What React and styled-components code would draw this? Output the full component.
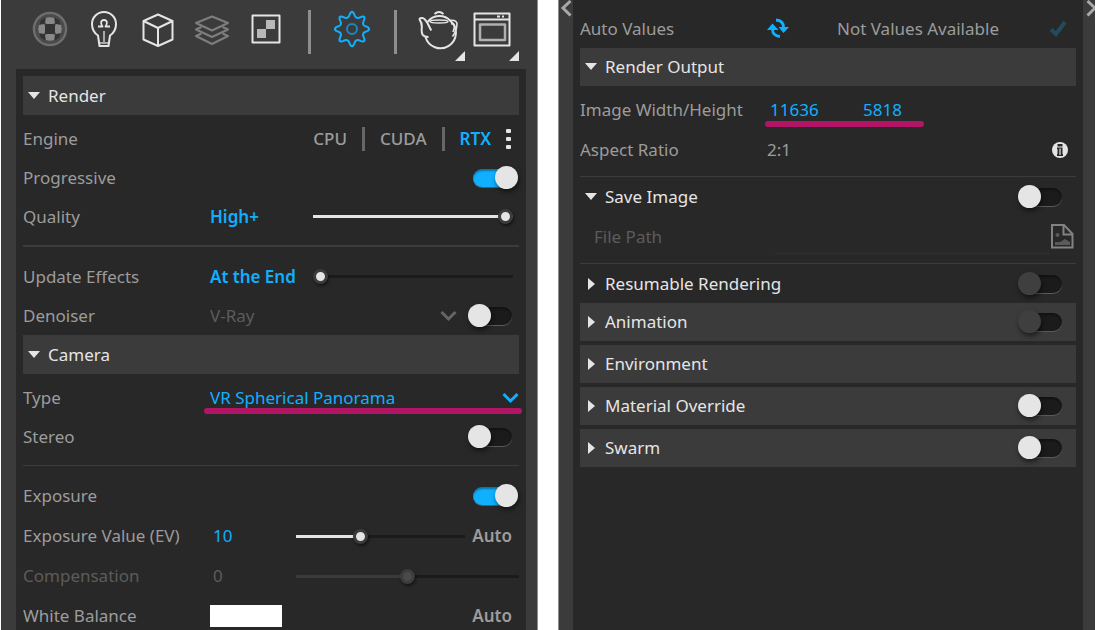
import React, { useState } from "react";
import styled, { createGlobalStyle } from "styled-components";

const c = {
  frame: "#3b3b3b",
  panel: "#282828",
  edge: "#8c8c8c",
  line: "#3c3c3c",
  label: "#9c9c9c",
  dim: "#5c5c5c",
  bright: "#e5e5e5",
  accent: "#10b0ff",
  mark: "#b31566",
  groove: "#1b1b1b",
};

const GlobalStyle = createGlobalStyle`
  *, *::before, *::after { box-sizing: border-box; }
  body {
    margin: 0;
    background: #fff;
    font-family: "Noto Sans", "Open Sans", sans-serif;
    font-size: 17px;
    line-height: 24px;
    color: ${c.label};
  }
  button, input, select { font: inherit; color: inherit; }
  button { padding: 0; border: 0; background: none; cursor: pointer; }
`;

const Page = styled.main`
  display: grid;
  grid-template-columns: minmax(0, 1fr) minmax(0, 1fr);
  gap: 20px;
  height: 100vh;
  padding: 0 1px;
  overflow: hidden;
`;

const LeftFrame = styled.section`
  display: flex;
  flex-direction: column;
  padding: 0 11px 0 15px;
  background: ${c.frame};
  border-right: 1px solid ${c.edge};
  overflow: hidden;
`;

const RightFrame = styled.section`
  display: grid;
  grid-template-columns: 14px minmax(0, 1fr) 12px;
  background: ${c.frame};
  border-left: 1px solid ${c.edge};
  overflow: hidden;
`;

const Panel = styled.div`
  flex: 1 0 auto;
  padding: 7px;
  background: ${c.panel};
`;

const Toolbar = styled.nav`
  display: flex;
  flex: none;
  align-items: flex-start;
  height: 69px;
  padding-left: 7px;
`;

const Tool = styled.button`
  position: relative;
  display: flex;
  align-items: center;
  justify-content: center;
  width: 54px;
  height: 60px;
  color: ${(p) => p.$tone || c.bright};
`;

const Corner = styled.span`
  position: absolute;
  right: 0;
  bottom: -1px;
  width: 10px;
  height: 10px;
  background: ${c.bright};
  clip-path: polygon(100% 0, 100% 100%, 0 100%);
`;

const ToolSeparator = styled.span`
  width: 3px;
  height: 44px;
  margin: 10px 14px 0 15px;
  background: #8e8e8e;
`;

const Rail = styled.button`
  display: flex;
  align-items: flex-start;
  justify-content: center;
  color: #a8a8a8;
`;

const Bar = styled.div`
  display: flex;
  align-items: center;
  height: ${(p) => p.$height || 38}px;
  background: ${(p) => (p.$plain ? "transparent" : c.frame)};
`;

const BarButton = styled.button`
  display: flex;
  flex: 1;
  align-items: center;
  gap: 8px;
  height: 100%;
  padding-left: 5px;
  color: ${c.bright};
  text-align: left;
`;

const BarStack = styled.div`
  display: grid;
  gap: 4px;
`;

const Group = styled.div`
  padding-top: ${(p) => (p.$first ? 4 : 0)}px;
`;

const Row = styled.div`
  display: grid;
  grid-template-columns: 187px minmax(0, 1fr);
  align-items: center;
  height: ${(p) => (p.$tall ? 40 : 39)}px;
  color: ${(p) => (p.$dim ? c.dim : c.label)};
`;

const Label = styled.label`
  white-space: nowrap;
  padding-left: ${(p) => (p.$indent ? 14 : 0)}px;
`;

const Cell = styled.div`
  position: relative;
  display: flex;
  align-items: center;
  justify-content: ${(p) => (p.$end ? "flex-end" : "flex-start")};
  height: 100%;
`;

const Divider = styled.hr`
  height: ${(p) => p.$weight || 1}px;
  margin: ${(p) => (p.$close ? "6px 0 0" : "9px 0 10px")};
  border: 0;
  background: ${c.line};
`;

const Strong = styled.output`
  flex: 1;
  font-weight: 600;
  color: ${c.accent};
  white-space: nowrap;
`;

const Choice = styled.button`
  font-weight: ${(p) => (p.$on ? 600 : 500)};
  color: ${(p) => (p.$on ? c.accent : c.label)};
`;

const ChoiceSeparator = styled.span`
  width: 3px;
  height: 24px;
  margin: 0 15px;
  background: #666;
`;

const More = styled.button`
  display: grid;
  gap: 4px;
  margin: 0 8px 0 15px;
`;

const Dot = styled.span`
  width: 5px;
  height: 4px;
  border-radius: 1px;
  background: ${c.bright};
`;

const Toggle = styled.input.attrs({ type: "checkbox", role: "switch" })`
  appearance: none;
  position: relative;
  flex: none;
  width: 39px;
  height: 18px;
  margin: 0 ${(p) => (p.$inset ? 14 : 7)}px 0 0;
  border-radius: 9px;
  background: ${c.groove};
  box-shadow: inset 0 2px 2px rgba(0, 0, 0, 0.35), 0 1px 0 #5a5a5a;

  &::before {
    content: "";
    position: absolute;
    left: -5px;
    top: -3px;
    width: 23px;
    height: 23px;
    border-radius: 50%;
    background: ${c.bright};
    box-shadow: 1px 3px 5px rgba(0, 0, 0, 0.5);
  }
  &:checked { background: ${c.accent}; }
  &:checked::before { left: 22px; }
  &:disabled::before { background: #3f3f3f; }
`;

const Slider = styled.input.attrs({ type: "range", min: 0, max: 100 })`
  appearance: none;
  flex: none;
  width: ${(p) => p.$width}px;
  height: 15px;
  margin: 0 ${(p) => p.$after || 0}px 0 0;
  background: linear-gradient(
      to right,
      ${(p) => (p.disabled ? "#3a3a3a" : c.bright)} ${(p) => p.value}%,
      ${c.groove} ${(p) => p.value}%
    )
    center / 100% 3px no-repeat;

  &::-webkit-slider-thumb {
    appearance: none;
    width: 15px;
    height: 15px;
    border: 3px solid #3c3c3c;
    border-radius: 50%;
    background: ${(p) => (p.disabled ? "#4a4a4a" : c.bright)};
    box-shadow: 1px 2px 3px rgba(0, 0, 0, 0.5);
  }
`;

const Select = styled.select`
  appearance: none;
  width: 100%;
  padding: 0;
  border: 0;
  background: none;
  color: ${(p) => (p.disabled ? c.dim : c.accent)};
  opacity: 1;
`;

const SelectBox = styled.div`
  position: relative;
  display: flex;
  flex: 1;
  align-items: center;
  margin-right: ${(p) => p.$after || 0}px;
  color: ${(p) => (p.$dim ? "#666" : c.accent)};
  svg { position: absolute; right: 0; pointer-events: none; }
`;

const NumberField = styled.input`
  width: ${(p) => p.$width}px;
  padding: 0 0 0 3px;
  border: 0;
  background: none;
  color: ${(p) => (p.disabled ? c.dim : c.accent)};
`;

const PathField = styled.input`
  flex: 1;
  height: 33px;
  min-width: 0;
  margin-left: 8px;
  padding: 0;
  border: 0;
  border-bottom: 1px solid #303030;
  background: none;
`;

const Auto = styled.button`
  margin-right: 7px;
  font-weight: 600;
`;

const Swatch = styled.input.attrs({ type: "color" })`
  appearance: none;
  width: 72px;
  height: 22px;
  padding: 0;
  border: 0;
  background: none;
  &::-webkit-color-swatch-wrapper { padding: 0; }
  &::-webkit-color-swatch { border: 0; border-radius: 0; }
`;

const Spacer = styled.span`
  flex: 1;
`;

const IconButton = styled.button`
  display: flex;
  margin-right: ${(p) => p.$after || 0}px;
  color: ${(p) => p.$tone};
`;

const Marker = styled.span`
  position: absolute;
  left: ${(p) => p.$left}px;
  right: ${(p) => p.$right};
  bottom: 3px;
  width: ${(p) => p.$width};
  height: 6px;
  border-radius: 3px;
  background: ${c.mark};
  pointer-events: none;
`;

const ToolSvg = ({ children }) => (
  <svg width="40" height="40" viewBox="0 0 40 40" fill="none" stroke="currentColor" strokeWidth="2" strokeLinejoin="round" aria-hidden="true">
    {children}
  </svg>
);

const gearPath = (() => {
  const pts = [];
  for (let i = 0; i < 160; i += 1) {
    const a = (i / 160) * Math.PI * 2;
    const r = 14.3 + 2.5 * Math.cos(8 * a) + 0.4 * Math.cos(16 * a);
    pts.push(`${(20 + r * Math.cos(a)).toFixed(2)} ${(19 + r * Math.sin(a)).toFixed(2)}`);
  }
  return `M${pts.join("L")}Z`;
})();

const MaterialIcon = () => (
  <ToolSvg>
    <circle cx="20" cy="19" r="14.5" fill="#4c4c4c" stroke="none" />
    <g stroke="none" fill="#333">
      <path d="M10.500 10.500l4.500-3 1 5.500-2 1-4.500 1z" />
      <path d="M29.500 10.500l-4.500-3-1 5.500 2 1 4.500 1z" />
      <path d="M10.500 27.500l4.500 3 1-5.500-2-1-4.500-1z" />
      <path d="M29.500 27.500l-4.500 3-1-5.500 2-1 4.500-1z" />
      <path d="M17 13h6l3 3v6l-3 3h-6l-3-3v-6z" />
    </g>
    <g stroke="none" fill="#888">
      <path d="M16 8q4-1.500 8 0l1 5-2 1h-6l-2-1z" />
      <path d="M16 30q4 1.500 8 0l1-5-2-1h-6l-2 1z" />
      <path d="M9 15q-1.500 4 0 8l5 1 1-2v-6l-1-2z" />
      <path d="M31 15q1.500 4 0 8l-5 1-1-2v-6l1-2z" />
    </g>
    <circle cx="20" cy="19" r="16" stroke="#6e6e6e" strokeWidth="2.500" />
  </ToolSvg>
);

const LightIcon = () => (
  <ToolSvg>
    <path d="M15.500 36L14 25.500C11 23.500 8 20 8 14a12 12 0 0 1 24 0c0 6-3 9.500-6 11.500L24.500 36z" />
    <path d="M14 16.500h4.500C16 13 17 10 20 10s4 3 1.500 6.500H26" strokeWidth="1.800" />
    <path d="M20 21v11" stroke="#a8a8a8" />
    <path d="M16 33h8" stroke="#a8a8a8" />
  </ToolSvg>
);

const GeometryIcon = () => (
  <ToolSvg>
    <path d="M20 4.500l14.500 6.500v18.500L20 36 5.500 29.500V11zM5.500 11L20 18l14.500-7M20 18v18" />
  </ToolSvg>
);

const LayersIcon = () => (
  <ToolSvg>
    <path d="M20 6.500L36 13 20 20.500 4 13z" />
    <path d="M9.500 17L4 19.500 20 27l16-7.500-5.500-2.500" />
    <path d="M9.500 23.500L4 26l16 8 16-8-5.500-2.500" />
  </ToolSvg>
);

const TextureIcon = () => (
  <ToolSvg>
    <rect x="6.500" y="5.500" width="27" height="27" />
    <path d="M20 10h9v9h-9zM11 19h9v9h-9z" fill="#b8b8b8" stroke="none" />
  </ToolSvg>
);

const SettingsIcon = () => (
  <ToolSvg>
    <path d={gearPath} />
    <circle cx="20" cy="19" r="5" stroke="#1b87c0" />
  </ToolSvg>
);

const TeapotIcon = () => (
  <ToolSvg>
    <path d="M9.500 12A15 15 0 0 1 32.500 11 15.500 15.500 0 1 1 7.500 27" />
    <path d="M13.300 20.500C10 15 8.500 8.500 4.500 8 2 7.500 1 9 2 10.500 6 15 2 20 4.500 24.500q1.500 2.500 6 2.500" />
    <ellipse cx="21" cy="11.500" rx="9" ry="1.500" strokeWidth="1.500" />
    <path d="M16.500 4q4.500-4 9 0" strokeWidth="1.800" />
    <path d="M32 10.500q6-1 7 3 0 7-4.500 13M33 14q3.500-1 3.500 1.500T35 22" strokeWidth="1.600" />
  </ToolSvg>
);

const FrameIcon = () => (
  <ToolSvg>
    <rect x="2.500" y="3.500" width="35" height="32" />
    <path d="M3 9.500h34" />
    <path d="M25 6.500h3M30 6.500h2" />
    <rect x="8" y="14.500" width="25" height="15.500" stroke="#b0b0b0" strokeWidth="2.500" />
  </ToolSvg>
);

const Chevron = () => (
  <svg width="17" height="12" viewBox="0 0 17 12" fill="none" stroke="currentColor" strokeWidth="3" aria-hidden="true">
    <path d="M1.500 2L8.500 9l7-7" />
  </svg>
);

const Arrow = ({ open }) => (
  <svg width="12" height="12" viewBox="0 0 12 12" fill="currentColor" aria-hidden="true">
    <path d={open ? "M0 2h12L6 9z" : "M3 0l7 6-7 6z"} />
  </svg>
);

const RefreshIcon = () => (
  <svg width="24" height="24" viewBox="0 0 24 24" fill="currentColor" aria-hidden="true">
    <path d="M0 13l5.500-6.500L11.500 13zM11.500 10h10.500L16.500 16z" />
    <path d="M5.500 12q0 7 7.500 7.500M9 3q7.500.5 7.500 7.500" fill="none" stroke="currentColor" strokeWidth="2.800" />
  </svg>
);

const CheckIcon = () => (
  <svg width="18" height="18" viewBox="0 0 18 18" fill="none" stroke="currentColor" strokeWidth="4" aria-hidden="true">
    <path d="M2 9.500L7 14l9-12" />
  </svg>
);

const InfoIcon = () => (
  <svg width="16" height="16" viewBox="0 0 16 16" aria-hidden="true">
    <circle cx="8" cy="8" r="8" fill="currentColor" />
    <path d="M5.500 2h5v2.500h-5zM5 5.500h5.500V12H11v2H5v-2h.5V7H5z" fill="#282828" />
    <path d="M7 6.500h2V13H7z" fill="#9a9a9a" />
  </svg>
);

const FileIcon = () => (
  <svg width="24" height="26" viewBox="0 0 24 26" fill="none" stroke="currentColor" strokeWidth="2" aria-hidden="true">
    <path d="M2 1h12l8.500 9v13.500H2z" />
    <path d="M13.500 1v9.500h9" />
    <circle cx="7.500" cy="11" r="2" fill="#5a5a5a" stroke="none" />
    <path d="M5 21v-3h5l5-3 5 3v3z" fill="#5a5a5a" stroke="none" />
  </svg>
);

function Section({ title, height, plain, open = false, toggle }) {
  const [on, setOn] = useState(false);
  return (
    <Bar $height={height} $plain={plain}>
      <BarButton type="button" aria-expanded={open}>
        <Arrow open={open} />
        {title}
      </BarButton>
      {toggle && (
        <Toggle
          $inset
          aria-label={title}
          checked={on}
          disabled={toggle === "disabled"}
          onChange={(e) => setOn(e.target.checked)}
        />
      )}
    </Bar>
  );
}

function Range({ start, ...rest }) {
  const [value, setValue] = useState(start);
  return <Slider value={value} onChange={(e) => setValue(e.target.value)} {...rest} />;
}

function RenderSettings() {
  return (
    <Panel>
      <Section title="Render" height={39} open />
      <Group $first>
        <Row>
          <span>Engine</span>
          <Cell $end>
            <Choice type="button">CPU</Choice>
            <ChoiceSeparator />
            <Choice type="button">CUDA</Choice>
            <ChoiceSeparator />
            <Choice type="button" $on>RTX</Choice>
            <More type="button" aria-label="More engine options">
              <Dot /><Dot /><Dot />
            </More>
          </Cell>
        </Row>
        <Row>
          <Label htmlFor="progressive">Progressive</Label>
          <Cell $end><Toggle id="progressive" defaultChecked /></Cell>
        </Row>
        <Row>
          <Label htmlFor="quality">Quality</Label>
          <Cell>
            <Strong>High+</Strong>
            <Range id="quality" start={100} $width={200} $after={6} />
          </Cell>
        </Row>
      </Group>
      <Divider $weight={2} />
      <Group>
        <Row>
          <Label htmlFor="effects">Update Effects</Label>
          <Cell>
            <Strong>At the End</Strong>
            <Range id="effects" start={0} $width={200} $after={6} />
          </Cell>
        </Row>
        <Row>
          <Label htmlFor="denoiser">Denoiser</Label>
          <Cell>
            <SelectBox $dim $after={16}>
              <Select id="denoiser" disabled><option>V-Ray</option></Select>
              <Chevron />
            </SelectBox>
            <Toggle aria-label="Use denoiser" />
          </Cell>
        </Row>
      </Group>
      <Section title="Camera" height={39} open />
      <Group $first>
        <Row>
          <Label htmlFor="type">Type</Label>
          <Cell>
            <SelectBox>
              <Select id="type"><option>VR Spherical Panorama</option></Select>
              <Chevron />
            </SelectBox>
            <Marker $left={-6} $right="-3px" />
          </Cell>
        </Row>
        <Row>
          <Label htmlFor="stereo">Stereo</Label>
          <Cell $end><Toggle id="stereo" /></Cell>
        </Row>
      </Group>
      <Divider />
      <Group>
        <Row $tall>
          <Label htmlFor="exposure">Exposure</Label>
          <Cell $end><Toggle id="exposure" defaultChecked /></Cell>
        </Row>
        <Row $tall>
          <Label htmlFor="ev">Exposure Value (EV)</Label>
          <Cell>
            <NumberField id="ev" defaultValue="10" $width={72} />
            <Spacer />
            <Range aria-label="Exposure value" start={37} $width={169} $after={7} />
            <Auto type="button">Auto</Auto>
          </Cell>
        </Row>
        <Row $tall $dim>
          <Label htmlFor="compensation">Compensation</Label>
          <Cell>
            <NumberField id="compensation" defaultValue="0" disabled $width={72} />
            <Spacer />
            <Range aria-label="Compensation amount" start={50} disabled $width={223} />
          </Cell>
        </Row>
        <Row $tall>
          <Label htmlFor="balance">White Balance</Label>
          <Cell>
            <Swatch id="balance" defaultValue="#ffffff" />
            <Spacer />
            <Auto type="button">Auto</Auto>
          </Cell>
        </Row>
      </Group>
    </Panel>
  );
}

const OutputPanel = styled(Panel)`
  padding-top: 9px;
`;

function OutputSettings() {
  return (
    <OutputPanel>
      <Row>
        <span>Auto Values</span>
        <Cell>
          <IconButton type="button" aria-label="Refresh values" $tone={c.accent} $after={46}>
            <RefreshIcon />
          </IconButton>
          <span>Not Values Available</span>
          <Spacer />
          <IconButton type="button" aria-label="Apply values" $tone="#234a5d" $after={9}>
            <CheckIcon />
          </IconButton>
        </Cell>
      </Row>
      <Section title="Render Output" open />
      <Group $first>
        <Row $tall>
          <Label htmlFor="width">Image Width/Height</Label>
          <Cell>
            <NumberField id="width" defaultValue="11636" $width={93} />
            <NumberField aria-label="Image height" defaultValue="5818" $width={72} />
            <Marker $left={-2} $width="159px" />
          </Cell>
        </Row>
        <Row $tall>
          <span>Aspect Ratio</span>
          <Cell>
            <span>2:1</span>
            <Spacer />
            <IconButton type="button" aria-label="Aspect ratio info" $tone={c.bright} $after={8}>
              <InfoIcon />
            </IconButton>
          </Cell>
        </Row>
      </Group>
      <Divider $close />
      <Section title="Save Image" height={40} plain open toggle="on" />
      <Row $tall $dim>
        <Label htmlFor="path" $indent>File Path</Label>
        <Cell>
          <PathField id="path" disabled />
          <IconButton type="button" aria-label="Choose file" $tone="#828282" $after={2}>
            <FileIcon />
          </IconButton>
        </Cell>
      </Row>
      <Divider $close />
      <Section title="Resumable Rendering" height={39} plain toggle="disabled" />
      <BarStack>
        <Section title="Animation" toggle="disabled" />
        <Section title="Environment" />
        <Section title="Material Override" toggle="on" />
        <Section title="Swarm" toggle="on" />
      </BarStack>
    </OutputPanel>
  );
}

export default function App() {
  return (
    <>
      <GlobalStyle />
      <Page>
        <LeftFrame>
          <Toolbar aria-label="Asset categories">
            <Tool type="button" aria-label="Materials"><MaterialIcon /></Tool>
            <Tool type="button" aria-label="Lights"><LightIcon /></Tool>
            <Tool type="button" aria-label="Geometry"><GeometryIcon /></Tool>
            <Tool type="button" aria-label="Render elements" $tone="#7e7e7e"><LayersIcon /></Tool>
            <Tool type="button" aria-label="Textures"><TextureIcon /></Tool>
            <ToolSeparator />
            <Tool type="button" aria-label="Settings" $tone={c.accent}><SettingsIcon /></Tool>
            <ToolSeparator />
            <Tool type="button" aria-label="Render"><TeapotIcon /><Corner /></Tool>
            <Tool type="button" aria-label="Frame buffer"><FrameIcon /><Corner /></Tool>
          </Toolbar>
          <RenderSettings />
        </LeftFrame>
        <RightFrame>
          <Rail type="button" aria-label="Collapse left">
            <svg width="12" height="18" viewBox="0 0 12 18" fill="none" stroke="currentColor" strokeWidth="3" aria-hidden="true">
              <path d="M10.500 1L3 8l7.500 7.500" />
            </svg>
          </Rail>
          <OutputSettings />
          <Rail type="button" aria-label="Collapse right">
            <svg width="12" height="18" viewBox="0 0 12 18" fill="none" stroke="currentColor" strokeWidth="3" aria-hidden="true">
              <path d="M4.500 1L12 8l-7.500 7.500" />
            </svg>
          </Rail>
        </RightFrame>
      </Page>
    </>
  );
}
